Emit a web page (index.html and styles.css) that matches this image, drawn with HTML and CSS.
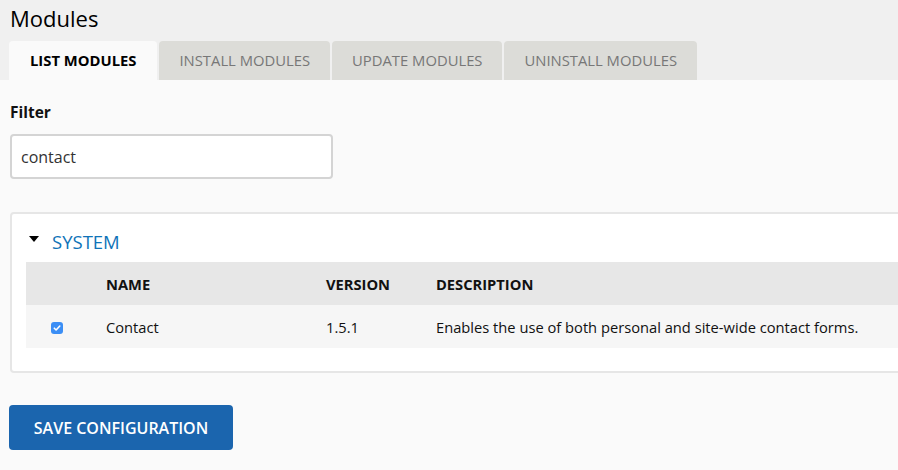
FILE: index.html
```html
<!DOCTYPE html>
<html lang="en">
  <head>
    <meta charset="UTF-8" />
    <meta name="viewport" content="width=device-width, initial-scale=1.0" />
    <title>Modules</title>
    <link rel="stylesheet" href="styles.css">
  </head>
  <body>
    <header class="page-header">
      <h1>Modules</h1>
      <nav class="tabs">
        <a class="tab active" href="#">List modules</a>
        <a class="tab" href="#">Install modules</a>
        <a class="tab" href="#">Update modules</a>
        <a class="tab" href="#">Uninstall modules</a>
      </nav>
    </header>

    <main class="content">
      <label class="filter-label" for="filter">Filter</label>
      <input type="text" id="filter" class="filter-input" value="contact" />

      <div class="fieldset">
        <div class="legend">
          <span class="caret"></span>
          <span class="legend-text">System</span>
        </div>
        <table class="modules">
          <thead>
            <tr>
              <th class="col-check"></th>
              <th class="col-name">Name</th>
              <th class="col-version">Version</th>
              <th>Description</th>
            </tr>
          </thead>
          <tbody>
            <tr>
              <td class="col-check">
                <span class="checkbox">
                  <svg width="12" height="12" viewBox="0 0 12 12">
                    <path d="M3.3 6.2 L5.1 8 L8.8 4" fill="none" stroke="#fff" stroke-width="1.6" stroke-linecap="round" stroke-linejoin="round" />
                  </svg>
                </span>
              </td>
              <td>Contact</td>
              <td>1.5.1</td>
              <td>Enables the use of both personal and site-wide contact forms.</td>
            </tr>
          </tbody>
        </table>
      </div>

      <button type="button" class="btn">Save configuration</button>
    </main>
  </body>
</html>
```

FILE: styles.css
```css
* {
  box-sizing: border-box;
  margin: 0;
  padding: 0;
}

html,
body {
  height: 100%;
}

body {
  font-family: "Open Sans", "DejaVu Sans", sans-serif;
  font-size: 14.7px;
  color: #222;
  background-color: #fafafa;
  overflow: hidden;
}

.page-header {
  background-color: #f0f0f0;
  padding: 0 0 0 9px;
}

.page-header h1 {
  font-size: 22px;
  font-weight: normal;
  line-height: 30px;
  padding: 3px 0 0 1px;
  margin-bottom: 8px;
  color: #000;
}

.tabs {
  display: flex;
  gap: 2px;
}

.tab {
  display: block;
  height: 39px;
  line-height: 39px;
  padding: 0 20px;
  font-size: 14.8px;
  text-transform: uppercase;
  text-decoration: none;
  color: #777;
  background-color: #dcdcd8;
  border-radius: 4px 4px 0 0;
}

.tab.active {
  padding: 0 21px;
  color: #000;
  font-weight: bold;
  background-color: #fafafa;
}

.content {
  padding: 22px 10px 0 10px;
}

.filter-label {
  display: block;
  font-weight: bold;
  font-size: 15.5px;
  line-height: 20px;
  color: #111;
  margin-bottom: 12px;
}

.filter-input {
  display: block;
  width: 323px;
  height: 45px;
  padding: 0 9px;
  font-family: inherit;
  font-size: 16px;
  color: #333;
  background-color: #fff;
  border: 2px solid #d4d4d4;
  border-radius: 4px;
  margin-bottom: 33px;
}

.fieldset {
  width: 1000px;
  background-color: #fff;
  border: 2px solid #e6e6e6;
  border-radius: 4px;
  padding: 0 14px 23px 14px;
  margin-bottom: 32px;
}

.legend {
  display: flex;
  align-items: center;
  height: 48px;
  padding: 6px 0 0 3px;
}

.caret {
  width: 0;
  height: 0;
  border-left: 5px solid transparent;
  border-right: 5px solid transparent;
  border-top: 6px solid #000;
  margin: 0 13px 5px 0;
}

.legend-text {
  font-size: 18.5px;
  color: #0f73b8;
  text-transform: uppercase;
}

.modules {
  width: 100%;
  border-collapse: collapse;
}

.modules th,
.modules td {
  height: 43px;
  text-align: left;
  padding: 0 16px;
  vertical-align: middle;
}

.modules th {
  background-color: #e7e7e7;
  font-weight: bold;
  text-transform: uppercase;
  color: #111;
}

.modules td {
  background-color: #f6f6f6;
  color: #111;
}

.modules .col-check {
  width: 64px;
  padding-left: 25px;
}

.modules .col-name {
  width: 220px;
}

.modules .col-version {
  width: 110px;
}

.checkbox {
  display: flex;
  align-items: center;
  justify-content: center;
  width: 12px;
  height: 12px;
  border-radius: 3px;
  background-color: #3b8ef5;
  margin-top: 2px;
}

.btn {
  display: block;
  margin-left: -1px;
  width: 224px;
  height: 45px;
  font-family: inherit;
  font-size: 16px;
  font-weight: 600;
  text-transform: uppercase;
  color: #fff;
  background-color: #1b65ae;
  border: none;
  border-radius: 4px;
  cursor: pointer;
}
```
